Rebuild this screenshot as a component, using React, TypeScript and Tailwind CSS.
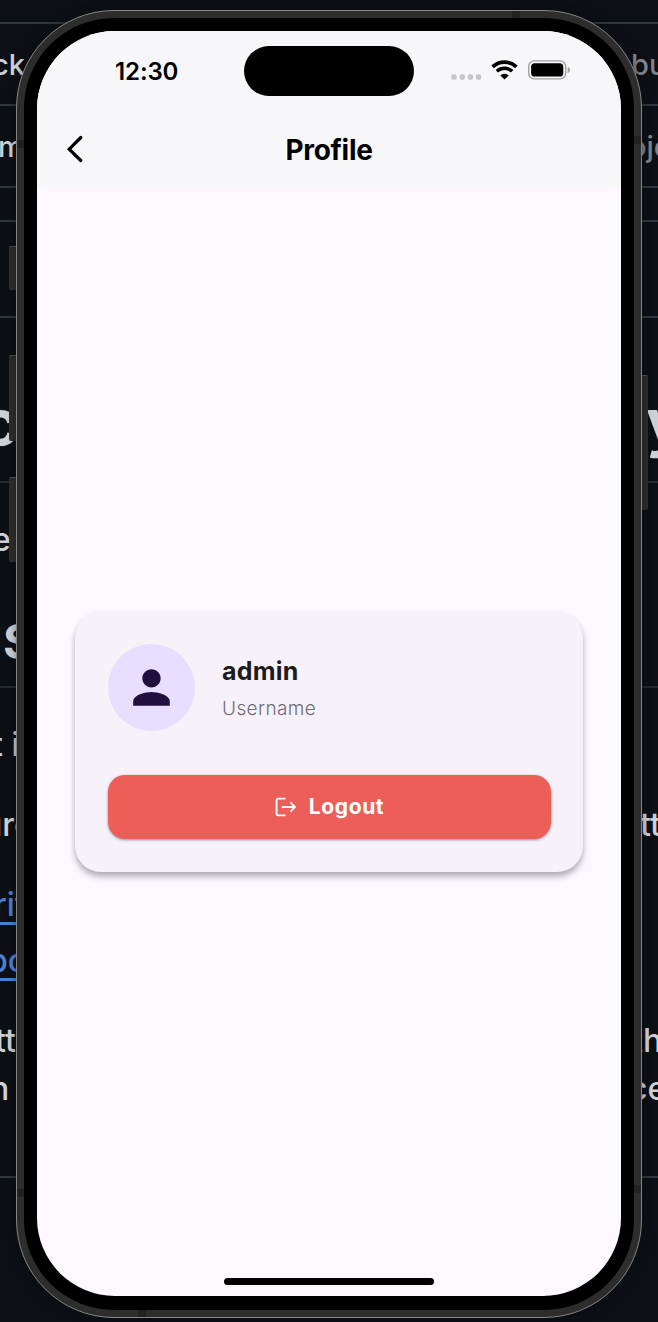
import React from "react";

const prose = "h-12 text-[32px] leading-[48px] flex justify-between whitespace-nowrap";

function BackgroundPage() {
  return (
    <div className="h-full w-full overflow-hidden bg-[#0c1015] font-medium text-[#cdd0d5]">
      <div className="h-6 border-b-2 border-[#30363d]" />
      <div className="flex h-[82px] items-center justify-between border-b-2 border-[#30363d] pt-0.5 text-[29px]">
        <span className="-ml-[8px]">ck</span>
        <span className="w-[27px] whitespace-nowrap text-[#7d828b]">bu</span>
      </div>
      <div className="flex h-[82px] items-center justify-between border-b-2 border-[#30363d] pt-0.5 text-[29px]">
        <span className="-ml-[2px]">m</span>
        <span className="w-[29px] whitespace-nowrap text-[#7d828b]">oje</span>
      </div>
      <div className="h-[34px] border-b-2 border-[#30363d]" />
      <div className="h-24 border-b-2 border-[#30363d]" />
      <div className="h-[165px] border-b-2 border-[#24292f] pt-16">
        <div className="flex justify-between text-[64px] font-bold leading-[80px]">
          <span className="-ml-[19px]">c</span>
          <span className="w-[12px]">y</span>
        </div>
      </div>
      <div className="h-[205px] border-b-2 border-[#24292f] pt-[33px]">
        <div className={prose}>
          <span className="-ml-[8px]">e</span>
        </div>
        <div className="mt-12 pl-[3px] text-[48px] font-bold leading-[60px]">S</div>
      </div>
      <div className="h-[490px] border-b-2 border-[#30363d] pt-[33px]">
        <div className={prose}>
          <span className="-ml-[8px]">t i</span>
        </div>
        <div className={prose + " mt-8"}>
          <span className="-ml-[17px]">ure</span>
          <span className="w-[18px]">tt</span>
        </div>
        <div className={prose + " mt-8 text-[#4b7fd6]"}>
          <span className="-ml-[6px] underline decoration-[3px] underline-offset-[6px]">rit</span>
        </div>
        <div className={prose + " mt-2 text-[#4b7fd6]"}>
          <span className="-ml-[12px] underline decoration-[3px] underline-offset-[6px]">bo</span>
        </div>
        <div className={prose + " mt-8"}>
          <span className="-ml-[5px]">tt</span>
          <span className="w-[26px]">th</span>
        </div>
        <div className={prose}>
          <span className="-ml-[10px]">n</span>
          <span className="w-[29px]">ce</span>
        </div>
      </div>
    </div>
  );
}

function StatusBar() {
  return (
    <div className="flex h-[79px] items-center justify-between pl-[78px] pr-[50px]">
      <span className="w-[120px] pt-[2px] text-[24px] font-semibold leading-none tracking-[-0.1px]">12:30</span>
      <div className="-mt-[1px] flex items-center">
        <svg className="mt-[13px] h-[6px] w-[31px]" viewBox="0 0 31 6" fill="#c6c6c8">
          <rect x="0.3" y="0.3" width="5.3" height="5.4" rx="1.6" />
          <rect x="8.6" y="0.3" width="5.3" height="5.4" rx="1.6" />
          <rect x="16.8" y="0.3" width="5.3" height="5.4" rx="1.6" />
          <rect x="24.9" y="0.3" width="5.3" height="5.4" rx="1.6" />
        </svg>
        <svg className="ml-[9px] h-[20px] w-[27px]" viewBox="0 0 27 20" fill="none" stroke="#000">
          <path d="M1.6 6.900C8.300.500 18.700.500 25.400 6.900" strokeWidth="3.700" />
          <path d="M5.800 11.300c4.300-4 11.100-4 15.400 0" strokeWidth="3.500" />
          <path d="M9.300 15.400c2.300-2.200 6.100-2.200 8.400 0l-4.200 4.200z" fill="#000" stroke="none" />
        </svg>
        <svg className="ml-[10px] h-[20px] w-[43px]" viewBox="0 0 43 20">
          <rect x="0.7" y="0.9" width="37" height="18" rx="5.500" fill="none" stroke="#a1a1a3" strokeWidth="1.400" />
          <rect x="3.100" y="3.300" width="32.200" height="13.200" rx="3.600" fill="#000" />
          <path d="M39.700 7c1.600.5 2.400 1.600 2.400 3s-.8 2.500-2.400 3z" fill="#a1a1a3" />
        </svg>
      </div>
    </div>
  );
}

function NavBar() {
  return (
    <div className="flex h-[77px] items-center px-[28px] pt-[2px]">
      <svg className="-mt-[2px] h-[28px] w-[20px]" viewBox="0 0 20 28" fill="none" stroke="#000" strokeWidth="3.200" strokeLinecap="round" strokeLinejoin="miter">
        <path d="M15.800 2.500L4.200 14.200L15.800 25.500" />
      </svg>
      <h1 className="flex-1 pr-5 text-center text-[28px] font-bold leading-none tracking-[-0.300px]">Profile</h1>
    </div>
  );
}

function ProfileCard() {
  return (
    <div className="flex h-[260px] w-[508px] flex-col rounded-[26px] bg-[#f7f2fa] px-[32.500px] pt-[32px] shadow-[0_5px_6px_rgba(0,0,0,0.25),0_2px_5px_rgba(0,0,0,0.08)]">
      <div className="flex h-[87px] items-center">
        <div className="flex size-[87px] items-center justify-center rounded-full bg-[#e8deff]">
          <svg className="size-[55px]" viewBox="0 0 24 24" fill="#21103f">
            <path d="M12 12c2.210 0 4-1.790 4-4s-1.790-4-4-4-4 1.790-4 4 1.790 4 4 4zm0 2c-2.670 0-8 1.340-8 4v2h16v-2c0-2.660-5.330-4-8-4z" />
          </svg>
        </div>
        <div className="ml-[27.500px] flex flex-col pt-[2px]">
          <span className="text-[25px] font-bold leading-[36px] tracking-[0.200px] text-[#1d1b20]">admin</span>
          <span className="mt-[6px] text-[19px] font-light leading-[28px] tracking-[0.400px] text-[#6f6c72]">Username</span>
        </div>
      </div>
      <button className="mt-[44px] flex h-[64px] items-center justify-center rounded-[17px] bg-[#ec5f59] pl-[1px] text-white shadow-[0_1px_3px_rgba(0,0,0,0.4)]">
        <svg className="h-[20px] w-[22px]" viewBox="0 0 22 20" fill="none" stroke="#fff" strokeWidth="1.800">
          <path d="M10.500 1.600H3.200Q1.600 1.600 1.600 3.200V16.800Q1.600 18.400 3.200 18.400H10.500M6.800 10H20M15.400 5.300L20 10L15.400 14.700" />
        </svg>
        <span className="ml-[12px] text-[21px] font-bold leading-none tracking-[0.600px]">Logout</span>
      </button>
    </div>
  );
}

export default function App() {
  return (
    <div className="relative h-[1322px] w-[658px] overflow-hidden font-['Inter',sans-serif]">
      <BackgroundPage />
      <div className="absolute left-[9px] top-[246px] h-[44px] w-[10px] rounded-l-[2px] border-t border-[#505050] bg-[#2d2d2d]" />
      <div className="absolute left-[9px] top-[355px] h-[86px] w-[10px] rounded-l-[2px] border-t border-[#505050] bg-[#2d2d2d]" />
      <div className="absolute left-[9px] top-[477px] h-[85px] w-[10px] rounded-l-[2px] border-t border-[#505050] bg-[#2d2d2d]" />
      <div className="absolute left-[638px] top-[375px] h-[135px] w-[10px] rounded-r-[2px] border-t border-[#505050] bg-[#2d2d2d]" />
      <div className="absolute left-[16px] top-[10px] h-[1308px] w-[626px] rounded-[98px] border border-[#858581] bg-[#2d2d2d] p-[7px] shadow-[0_0_10px_rgba(0,0,0,0.4)]">
        <div className="absolute left-[495px] top-0 h-[7px] w-[8px] bg-[#222]" />
        <div className="absolute left-0 top-[129px] h-[8px] w-[7px] bg-[#222]" />
        <div className="absolute right-0 top-[125px] h-[8px] w-[7px] bg-[#222]" />
        <div className="absolute left-0 top-[1178px] h-[8px] w-[7px] bg-[#222]" />
        <div className="absolute right-0 top-[1174px] h-[8px] w-[7px] bg-[#222]" />
        <div className="absolute bottom-0 left-[121px] h-[7px] w-[8px] bg-[#222]" />
        <div className="h-full rounded-[90px] bg-black px-[13px] pb-[14px] pt-[13px]">
          <div className="relative flex h-full flex-col overflow-hidden rounded-[78px] bg-[#fdf8ff] text-black">
            <header className="h-[156px] shrink-0 bg-[#f7f7f9]">
              <StatusBar />
              <NavBar />
            </header>
            <main className="flex flex-1 justify-center pt-[424.500px]">
              <ProfileCard />
            </main>
            <div className="mx-auto mb-[11px] h-[7px] w-[210px] rounded-full bg-black" />
            <div className="absolute left-[207px] top-[15px] h-[50px] w-[170px] rounded-full bg-black" />
          </div>
        </div>
      </div>
    </div>
  );
}
